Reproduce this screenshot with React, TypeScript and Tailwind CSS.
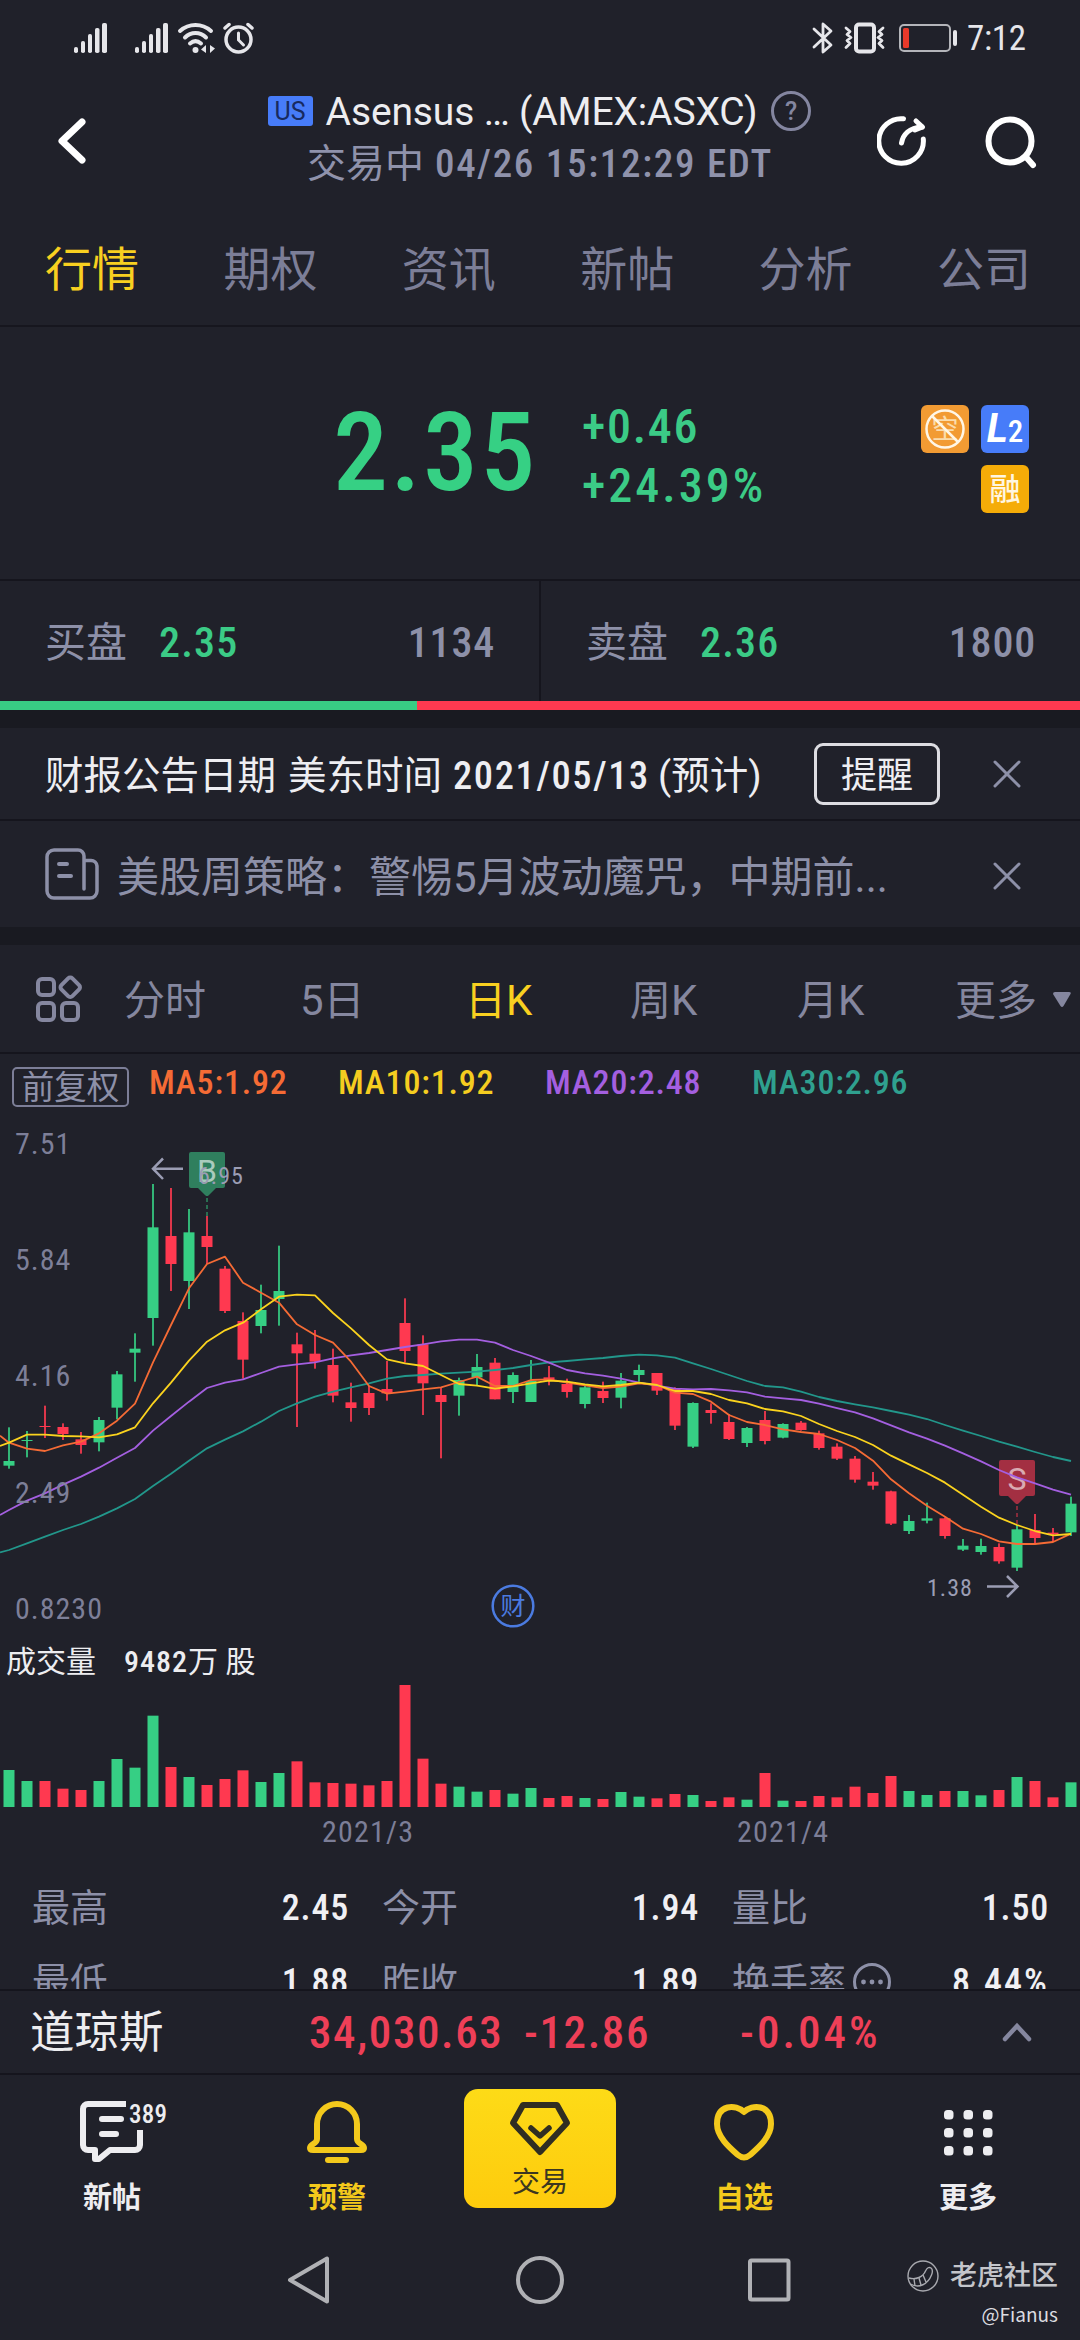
import * as React from "react";

type Candle = [color: "g" | "r", high: number, top: number, bottom: number, low: number, volume: number];

const GREEN = "#36cf84";
const RED = "#ff3950";
const MUTED = "#8486a0";

const STEP = 18;

// Prices and volumes in thirds of a pixel, measured down from the chart's top edge
const candles: Candle[] = [
    ["g", 952, 1053, 1067, 1076, 111],
    ["g", 963, 990, 993, 1042, 78],
    ["r", 887, 948, 951, 984, 78],
    ["r", 940, 951, 972, 990, 55],
    ["r", 966, 988, 1005, 1031, 51],
    ["g", 921, 930, 997, 1024, 78],
    ["g", 783, 793, 893, 928, 144],
    ["g", 670, 716, 728, 815, 118],
    ["g", 222, 352, 624, 707, 274],
    ["r", 234, 378, 462, 543, 120],
    ["g", 297, 367, 513, 597, 90],
    ["r", 318, 378, 411, 462, 66],
    ["r", 468, 476, 603, 609, 84],
    ["r", 607, 633, 749, 806, 110],
    ["g", 524, 600, 648, 670, 75],
    ["g", 407, 543, 567, 647, 102],
    ["r", 668, 703, 730, 951, 137],
    ["r", 660, 731, 755, 776, 74],
    ["r", 716, 765, 857, 877, 72],
    ["r", 818, 877, 894, 935, 70],
    ["r", 828, 849, 894, 915, 65],
    ["r", 753, 837, 850, 872, 78],
    ["r", 565, 639, 723, 758, 366],
    ["r", 676, 703, 820, 915, 145],
    ["r", 832, 855, 876, 1045, 70],
    ["g", 803, 810, 857, 917, 61],
    ["g", 732, 771, 802, 825, 46],
    ["r", 744, 758, 868, 868, 51],
    ["g", 787, 795, 846, 879, 40],
    ["g", 750, 813, 876, 876, 57],
    ["r", 768, 802, 812, 826, 27],
    ["r", 806, 822, 846, 863, 33],
    ["g", 828, 832, 882, 895, 27],
    ["r", 815, 843, 864, 879, 24],
    ["g", 789, 812, 863, 895, 45],
    ["g", 764, 780, 795, 815, 31],
    ["r", 789, 789, 842, 855, 26],
    ["r", 832, 835, 947, 960, 39],
    ["g", 877, 879, 1010, 1014, 36],
    ["r", 880, 900, 909, 941, 18],
    ["r", 912, 936, 987, 990, 29],
    ["g", 951, 954, 999, 1011, 22],
    ["r", 903, 930, 993, 1003, 102],
    ["g", 940, 942, 983, 985, 19],
    ["r", 933, 938, 960, 962, 18],
    ["r", 962, 970, 1014, 1019, 33],
    ["r", 1000, 1010, 1046, 1050, 29],
    ["r", 1038, 1046, 1109, 1118, 61],
    ["r", 1086, 1115, 1127, 1139, 42],
    ["r", 1142, 1144, 1241, 1245, 93],
    ["g", 1215, 1233, 1263, 1272, 48],
    ["g", 1178, 1225, 1232, 1240, 36],
    ["r", 1222, 1225, 1278, 1286, 48],
    ["g", 1287, 1307, 1319, 1323, 48],
    ["g", 1286, 1308, 1326, 1334, 35],
    ["r", 1300, 1311, 1354, 1361, 51],
    ["g", 1245, 1258, 1373, 1383, 90],
    ["r", 1212, 1260, 1284, 1300, 78],
    ["r", 1254, 1268, 1273, 1295, 29],
    ["g", 1160, 1181, 1267, 1278, 74],
];

const averages = [
    {
        color: "#22978b",
        values: [1327, 1320, 1300, 1280, 1260, 1242, 1220, 1195, 1167, 1128, 1091, 1052, 1015, 989, 964, 935, 903, 880, 860, 845, 832, 820, 806, 798, 795, 791, 788, 785, 780, 774, 765, 757, 753, 748, 744, 738, 734, 736, 743, 760, 777, 795, 813, 828, 832, 845, 861, 873, 883, 892, 903, 914, 927, 945, 962, 978, 995, 1010, 1026, 1041, 1053],
    },
    {
        color: "#a45fe0",
        values: [1215, 1200, 1172, 1150, 1124, 1100, 1073, 1043, 1014, 962, 918, 875, 834, 818, 808, 789, 770, 763, 757, 745, 736, 729, 720, 711, 703, 694, 689, 689, 698, 720, 738, 758, 780, 790, 797, 806, 818, 827, 836, 838, 837, 841, 847, 860, 865, 870, 881, 894, 907, 925, 946, 967, 986, 1007, 1030, 1054, 1080, 1102, 1120, 1139, 1154],
    },
    {
        color: "#f56b35",
        values: [977, 998, 1016, 1023, 1006, 995, 970, 932, 881, 757, 645, 535, 462, 440, 518, 548, 578, 643, 675, 698, 755, 828, 851, 845, 838, 832, 816, 800, 828, 828, 810, 808, 818, 826, 834, 830, 820, 825, 848, 852, 875, 915, 936, 945, 958, 966, 972, 990, 1014, 1052, 1108, 1150, 1187, 1220, 1256, 1272, 1294, 1302, 1302, 1296, 1271],
    },
    {
        color: "#fbd31e",
        values: [1008, 998, 974, 974, 978, 979, 982, 973, 952, 880, 818, 752, 695, 661, 638, 598, 560, 554, 556, 609, 655, 705, 748, 760, 768, 795, 822, 827, 836, 829, 820, 812, 815, 823, 829, 825, 818, 825, 843, 843, 852, 870, 880, 897, 904, 918, 942, 963, 981, 1005, 1037, 1063, 1089, 1118, 1154, 1190, 1223, 1245, 1263, 1276, 1272],
    },
];

const axisLabels = [
    { text: "7.51", y: 44 },
    { text: "5.84", y: 160 },
    { text: "4.16", y: 276 },
    { text: "2.49", y: 393 },
    { text: "0.8230", y: 509 },
];

function toPoints(values: number[]) {
    // the first value sits on the left edge, half a step before candle 0
    return values.map((v, i) => `${i === 0 ? 0 : 9 + STEP * (i - 1)},${v / 3}`).join(" ");
}

function Signal() {
    return (
        <svg width="34" height="32" viewBox="0 0 34 32" fill="#e6e6ea">
            <rect x="0" y="25" width="4" height="6" rx="1.8" />
            <rect x="7" y="19" width="4" height="12" rx="1.8" />
            <rect x="14" y="12" width="4" height="19" rx="1.8" />
            <rect x="21" y="6" width="4.5" height="25" rx="1.8" />
            <rect x="28" y="1" width="5" height="30" rx="1.8" />
        </svg>
    );
}

function StatusBar() {
    return (
        <div className="flex h-[75px] items-center pl-[74px] pr-[56px]">
            <Signal />
            <div className="w-[27px]" />
            <Signal />
            <svg className="ml-[8px]" width="38" height="32" viewBox="0 0 38 32" fill="none" stroke="#e6e6ea" strokeWidth="4" strokeLinecap="round">
                <path d="M3 9C12 1 25 1 34 9" />
                <path d="M8 15.5C14 9.500 23 9.500 29 15.500" />
                <path d="M13 21.500C16.500 18.500 20.500 18.500 24 21.500" />
                <circle cx="18.500" cy="28" r="3" fill="#e6e6ea" stroke="none" />
                <path d="M29 23v8l-5-3.500zM33 23l5 3.500-5 4.500z" fill="#e6e6ea" stroke="none" />
            </svg>
            <svg className="ml-[8px]" width="32" height="32" viewBox="0 0 32 32" fill="none" stroke="#e6e6ea" strokeWidth="3.500" strokeLinecap="round">
                <circle cx="15.500" cy="17.500" r="12.500" />
                <path d="M15.500 11v7l5 5" strokeWidth="3" />
                <path d="M2 6l4-3.500M29 6l-4-3.500" />
            </svg>
            <div className="flex-1" />
            <svg width="22" height="32" viewBox="0 0 22 32" fill="none" stroke="#e6e6ea" strokeWidth="2.800" strokeLinejoin="round" strokeLinecap="round">
                <path d="M2 7L19 23L11 30V2L19 9L2 25" />
            </svg>
            <svg className="ml-[10px]" width="42" height="32" viewBox="0 0 42 32" fill="none" stroke="#e6e6ea" strokeLinecap="round" strokeLinejoin="round">
                <rect x="12" y="2.500" width="18" height="27" rx="3" strokeWidth="4" />
                <path d="M2 6l4 3.500-3 3 4 3-4 3 3 3-4 4M39 6l-4 3.500 3 3-4 3 4 3-3 3 4 4" strokeWidth="2.800" />
            </svg>
            <svg className="ml-[13px]" width="59" height="30" viewBox="0 0 59 30">
                <rect x="1" y="2" width="50" height="26" rx="4" fill="none" stroke="#b4b5ba" strokeWidth="2" />
                <rect x="4" y="5" width="6" height="20" rx="1.500" fill="#e8392a" />
                <rect x="54" y="7" width="4" height="16" rx="2" fill="#e6e6ea" />
            </svg>
            <span className="ml-[9px] w-[57px] whitespace-nowrap pt-[2px] text-[35px] leading-none tracking-[-0.300px] text-[#e6e6ea] [font-stretch:75%]">7:12</span>
        </div>
    );
}

function Header() {
    return (
        <div className="grid h-[146px] grid-cols-[230px_1fr_230px]">
            <div className="pl-[55px] pt-[41px]">
                <svg width="34" height="50" viewBox="0 0 34 50" fill="none" stroke="#fff" strokeWidth="7" strokeLinecap="round" strokeLinejoin="round">
                    <path d="M27 6L7 25L27 44" />
                </svg>
            </div>
            <div className="flex flex-col items-center pt-[13px]">
                <div className="flex h-[46px] items-center whitespace-nowrap">
                    <span className="flex h-[30px] w-[45px] items-center justify-center rounded-[3px] bg-[#477cf9] text-[25px] leading-none text-[#172a60]">US</span>
                    <span className="ml-[13px] pt-[3px] text-[39px] leading-none tracking-[-0.150px] text-[#ededf0]">Asensus … (AMEX:ASXC)</span>
                    <svg className="ml-[13px]" width="42" height="42" viewBox="0 0 42 42">
                        <circle cx="21" cy="21" r="18.500" fill="none" stroke={MUTED} strokeWidth="3" />
                        <text x="21" y="30" textAnchor="middle" fontSize="25" fontWeight="500" fill={MUTED}>?</text>
                    </svg>
                </div>
                <div className="mt-[7px] flex h-[46px] items-center gap-[11px] whitespace-nowrap text-[39px] leading-none text-[#8f92ab]">
                    <span>交易中</span>
                    <span className="font-medium tracking-[1.700px] [font-stretch:75%]">04/26 15:12:29 EDT</span>
                </div>
            </div>
            <div className="flex items-start pl-[27px] pt-[40px]">
                <svg width="52" height="52" viewBox="0 0 52 52" fill="none" stroke="#fff" strokeWidth="5" strokeLinecap="round" strokeLinejoin="round">
                    <path d="M26.500 3.800A22.300 22.300 0 1 0 46.300 24" />
                    <path d="M24.500 28C26 20 32 12.500 45 12" />
                    <path d="M39 6L45.500 12L38 15" />
                </svg>
                <svg className="ml-[53px]" width="58" height="58" viewBox="0 0 58 58" fill="none" stroke="#fff" strokeWidth="6" strokeLinecap="round">
                    <circle cx="28" cy="26" r="21.500" />
                    <path d="M44 42L51 50" />
                </svg>
            </div>
        </div>
    );
}

function MainTabs() {
    const tabs = ["行情", "期权", "资讯", "新帖", "分析", "公司"];
    return (
        <div className="flex h-[106px] justify-between border-b-2 border-[#16161e] pl-[45px] pr-[49px] pt-[25px] text-[47px] leading-none text-[#7c7e97]">
            {tabs.map((tab, i) => (
                <span key={tab} className={i === 0 ? "text-[#f8d020]" : ""}>{tab}</span>
            ))}
        </div>
    );
}

function Quote() {
    return (
        <div className="flex h-[254px] border-b-2 border-[#15151d] text-[#3bcb86]">
            <div className="w-[582px] pl-[333px] pt-[71px]">
                <span className="text-[110px] font-medium leading-none tracking-[2.200px] text-[#36d084] [font-stretch:75%]">2.35</span>
            </div>
            <div className="flex w-[339px] flex-col pt-[70px] text-[48px] font-medium leading-[59px] [font-stretch:75%]">
                <span className="tracking-[1.700px]">+0.46</span>
                <span className="tracking-[3px]">+24.39%</span>
            </div>
            <div className="grid h-fit grid-cols-[48px_48px] gap-[12px] pt-[78px]">
                <div className="flex size-[48px] items-center justify-center rounded-[6px] bg-[#f29b33]">
                    <svg width="44" height="44" viewBox="0 0 44 44">
                        <text x="22" y="32" textAnchor="middle" fontSize="27" fill="#fbdcab">空</text>
                        <circle cx="22" cy="22" r="18.500" fill="none" stroke="#fff6e6" strokeWidth="2.500" />
                        <path d="M9 9L35 35" stroke="#fff6e6" strokeWidth="2.500" />
                    </svg>
                </div>
                <div className="flex size-[48px] items-baseline justify-center rounded-[6px] bg-[#477cf9] leading-[48px] text-white">
                    <span className="text-[40px] font-bold italic">L</span>
                    <span className="text-[31px] font-medium [font-stretch:75%]">2</span>
                </div>
                <div className="col-start-2 flex size-[48px] items-center justify-center rounded-[6px] bg-[#f5ac08] text-[31px] font-medium leading-none text-[#fff6e0]">融</div>
            </div>
        </div>
    );
}

function BookSide({ label, price, size }: { label: string; price: string; size: string }) {
    return (
        <div className="flex flex-1 items-center pl-[45px] pr-[44px] pt-[4px] text-[41px] leading-none text-[#8d90a8]">
            <span className="w-[114px]">{label}</span>
            <span className="flex-1 text-[42px] font-medium tracking-[1.200px] text-[#3bcb86] [font-stretch:75%]">{price}</span>
            <span className="text-[42px] font-medium tracking-[0.800px] [font-stretch:75%]">{size}</span>
        </div>
    );
}

function Close() {
    return (
        <svg width="30" height="30" viewBox="0 0 30 30" stroke="#8d90a8" strokeWidth="3" strokeLinecap="round">
            <path d="M3 3L27 27M27 3L3 27" />
        </svg>
    );
}

function Notices() {
    return (
        <div className="border-y-[18px] border-[#191a21]">
            <div className="flex h-[93px] items-center border-b-2 border-[#15151d] pl-[45px] text-[38.500px] leading-none text-[#eeeef2]">
                <span className="w-[243px] whitespace-nowrap pt-[6px]">财报公告日期</span>
                <span className="w-[165px] pt-[6px]">美东时间</span>
                <span className="w-[205px] whitespace-nowrap pt-[6px] font-medium tracking-[1.600px] [font-stretch:75%]">2021/05/13</span>
                <span className="w-[110px] whitespace-nowrap pt-[6px]">(预计)</span>
                <span className="ml-[46px] flex h-[62px] w-[126px] items-center justify-center rounded-[9px] border-[3px] border-[#dddde2] pt-[5px] text-[36px]">提醒</span>
                <div className="ml-[52px]"><Close /></div>
            </div>
            <div className="flex h-[106px] items-center pl-[45px] text-[42px] leading-none text-[#8d90a8]">
                <svg width="54" height="52" viewBox="0 0 54 52" fill="none" stroke="#8d90a8" strokeWidth="3.500" strokeLinecap="round">
                    <path d="M39 13V8a6 6 0 0 0-6-6H9a7 7 0 0 0-7 7v34a7 7 0 0 0 7 7h36a7 7 0 0 0 7-7V18a6 6 0 0 0-6-5.500h-7V41" />
                    <path d="M14 16h8M14 28h12" strokeWidth="4" />
                </svg>
                <span className="ml-[18px] w-[875px] whitespace-nowrap pt-[7px]">美股周策略：警惕5月波动魔咒，中期前...</span>
                <div className="pt-[3px]"><Close /></div>
            </div>
        </div>
    );
}

function ChartTabs() {
    return (
        <div className="flex h-[109px] items-center border-b-2 border-[#15151d] pl-[34px] pt-[5px] text-[41px] leading-none text-[#85879f]">
            <svg className="mb-[4px]" width="50" height="50" viewBox="0 0 50 50" fill="none" stroke="#85879f" strokeWidth="4">
                <rect x="4" y="5" width="16" height="16" rx="4" />
                <rect x="4" y="29" width="16" height="17" rx="4" />
                <rect x="28" y="29" width="16" height="17" rx="4" />
                <rect x="28.500" y="5.500" width="15.500" height="15.500" rx="3" transform="rotate(45 36.250 13.250)" />
            </svg>
            <span className="ml-[40px] w-[176px]">分时</span>
            <span className="w-[165px]"><span className="text-[42px]">5</span>日</span>
            <span className="w-[165px] text-[#f8d020]">日<span className="text-[42px]">K</span></span>
            <span className="w-[167px]">周<span className="text-[42px]">K</span></span>
            <span className="w-[158px]">月<span className="text-[42px]">K</span></span>
            <span className="w-[97px]">更多</span>
            <svg className="mb-[3px]" width="20" height="18" viewBox="0 0 20 18" fill="#85879f">
                <path d="M1 3Q1 1 3 1H17Q19.500 1 18.500 3L11.500 15Q10 17 8.500 15Z" />
            </svg>
        </div>
    );
}

function MaLegend() {
    return (
        <div className="flex h-[56px] items-start pl-[12px] pt-[11px] text-[34px] font-medium leading-none tracking-[0.800px] [font-stretch:75%]">
            <span className="mt-[2px] flex h-[40px] w-[117px] items-center justify-center rounded-[5px] border-2 border-[#7c7e97] pt-[3px] text-[32.500px] font-normal tracking-normal text-[#8d90a8]">前复权</span>
            <span className="ml-[20px] w-[189px] text-[#f56b35]">MA5:1.92</span>
            <span className="w-[207px] text-[#f5cd20]">MA10:1.92</span>
            <span className="w-[207px] text-[#a45fe0]">MA20:2.48</span>
            <span className="text-[#2fa08f]">MA30:2.96</span>
        </div>
    );
}

function Marker({ x, y, letter, fill }: { x: number; y: number; letter: string; fill: string }) {
    return (
        <g transform={`translate(${x} ${y})`}>
            <path d="M-16 0H16Q18 0 18 2V34Q18 36 16 36H9L1.500 43.500Q0 44.500-1.500 43.500L-9 36H-16Q-18 36-18 34V2Q-18 0-16 0Z" fill={fill} />
            <text className="[font-stretch:100%]" x="0" y="29.500" textAnchor="middle" fontSize="32" fill="#ffffff" fillOpacity="0.6">{letter}</text>
        </g>
    );
}

function PriceChart() {
    return (
        <svg className="block [font-stretch:75%]" width="1080" height="520" viewBox="0 0 1080 520">
            {candles.map(([color, high, top, bottom, low], i) => {
                const x = 9 + STEP * i;
                const fill = color === "g" ? GREEN : RED;
                return (
                    <g key={i} fill={fill}>
                        <rect x={x - 1} y={high / 3} width={2} height={(low - high) / 3} fillOpacity="0.85" />
                        <rect x={x - 5.5} y={top / 3} width={11} height={Math.max(1, (bottom - top) / 3)} />
                    </g>
                );
            })}
            <path d="M207 88V106" stroke={GREEN} strokeWidth="1.5" strokeDasharray="4 3" opacity="0.6" />
            <path d="M1017 396V415" stroke={RED} strokeWidth="1.5" strokeDasharray="4 3" opacity="0.6" />
            <Marker x={207} y={42} letter="B" fill="#2f7f5e" />
            <Marker x={1017} y={350} letter="S" fill="#a32f42" />
            {averages.map((line) => (
                <polyline key={line.color} points={toPoints(line.values)} fill="none" stroke={line.color} strokeWidth="1.8" strokeLinejoin="round" />
            ))}
            {axisLabels.map((label) => (
                <text key={label.text} x="15" y={label.y} fontSize="30" letterSpacing="1" fill="#8486a0" fillOpacity="0.95">{label.text}</text>
            ))}
            <g fill="none" stroke="#9b9db4" strokeWidth="2.5">
                <path d="M183 58.700H153M163 48.500L153 58.700L163 69" />
                <path d="M987 476.500H1017M1007 466L1017.500 476.500L1007 487" />
            </g>
            <text x="198" y="74" fontSize="24" letterSpacing="1" fill="#9b9db4">6.95</text>
            <text x="927" y="486" fontSize="24" letterSpacing="1" fill="#9b9db4">1.38</text>
            <circle cx="513" cy="496" r="20.300" fill="none" stroke="#4b7be0" strokeWidth="2.500" />
            <text x="513" y="505" textAnchor="middle" fontSize="25" fill="#4b7be0">财</text>
        </svg>
    );
}

function Volume() {
    return (
        <div className="h-[228px]">
            <div className="flex h-[50px] items-end pb-[3px] pl-[6px] text-[30px] leading-none text-[#ededf0]">
                <span className="w-[118px]">成交量</span>
                <span className="whitespace-nowrap"><span className="font-medium tracking-[1px] [font-stretch:75%]">9482</span>万 股</span>
            </div>
            <svg className="block" width="1080" height="127" viewBox="0 0 1080 127">
                {candles.map(([color, , , , , volume], i) => (
                    <rect key={i} x={3.5 + STEP * i} y={127 - volume / 3} width={11} height={volume / 3} fill={color === "g" ? GREEN : RED} />
                ))}
            </svg>
            <div className="flex pl-[322px] pt-[10px] text-[30px] leading-none tracking-[1.200px] text-[#7c7e97] [font-stretch:75%]">
                <span className="w-[415px]">2021/3</span>
                <span>2021/4</span>
            </div>
        </div>
    );
}

const stats = [
    { label: "最高", value: "2.45" },
    { label: "今开", value: "1.94" },
    { label: "量比", value: "1.50" },
    { label: "最低", value: "1.88" },
    { label: "昨收", value: "1.89" },
    { label: "换手率", value: "8.44%", more: true },
];

function Stats() {
    return (
        <div className="h-[131px] overflow-hidden">
            <div className="grid auto-rows-[74px] grid-cols-[317px_317px_317px] gap-x-[33px] pl-[32px] pt-[13px]">
                {stats.map((s) => (
                    <div key={s.label} className="flex items-center whitespace-nowrap text-[38px] leading-none text-[#8d90a8]">
                        <span>{s.label}</span>
                        {s.more && (
                            <svg className="ml-[6px]" width="40" height="40" viewBox="0 0 40 40" fill="#8d90a8">
                                <circle cx="20" cy="20" r="17.500" fill="none" stroke="#8d90a8" strokeWidth="3" />
                                <circle cx="11.500" cy="20" r="2.400" />
                                <circle cx="20" cy="20" r="2.400" />
                                <circle cx="28.500" cy="20" r="2.400" />
                            </svg>
                        )}
                        <span className={s.more ? "ml-auto text-[36px] font-medium tracking-[2px] text-[#f0f0f4] [font-stretch:75%]" : "ml-auto text-[36px] font-medium tracking-[0.800px] text-[#f0f0f4] [font-stretch:75%]"}>{s.value}</span>
                    </div>
                ))}
            </div>
        </div>
    );
}

function IndexBar() {
    return (
        <div className="flex h-[86px] items-center border-y-2 border-[#15151d] pl-[30px] text-[45px] font-medium leading-none tracking-[1.600px] text-[#ee3f57] [font-stretch:75%]">
            <span className="w-[279px] pt-[3px] text-[44.500px] font-normal tracking-normal text-[#ededf0]">道琼斯</span>
            <span className="w-[215px]">34,030.63</span>
            <span className="w-[216px]">-12.86</span>
            <span className="w-[260px] tracking-[3px]">-0.04%</span>
            <svg width="34" height="24" viewBox="0 0 34 24" fill="none" stroke="#85879f" strokeWidth="4.500" strokeLinecap="round">
                <path d="M5 19L17 6L29 19" />
            </svg>
        </div>
    );
}

function NavItem({ label, color, children }: { label: string; color: string; children: React.ReactNode }) {
    return (
        <div className="flex w-[120px] flex-col items-center pt-[22px]" style={{ color }}>
            <div className="relative flex h-[68px] items-center justify-center">{children}</div>
            <span className="mt-[19px] text-[29px] font-bold leading-none">{label}</span>
        </div>
    );
}

function BottomNav() {
    const dots = [0, 1, 2];
    return (
        <div className="flex h-[145px] items-start pl-[52px]">
            <NavItem label="新帖" color="#ededf0">
                <svg width="68" height="64" viewBox="0 0 68 64" fill="none" stroke="currentColor" strokeWidth="6" strokeLinecap="butt" strokeLinejoin="round">
                    <path d="M48 5H10a5 5 0 0 0-5 5V46a5 5 0 0 0 5 5H17V60H21L32 51H57a5 5 0 0 0 5-5V31" />
                    <path d="M24 20H43M24 35H38" strokeLinecap="round" />
                </svg>
                <span className="absolute left-[51px] top-[5px] text-[25px] font-medium leading-none tracking-[0.300px] [font-stretch:75%]">389</span>
            </NavItem>
            <div className="ml-[105px]">
                <NavItem label="预警" color="#f3c91c">
                    <svg width="64" height="66" viewBox="0 0 64 66" fill="none" stroke="currentColor" strokeWidth="6" strokeLinecap="round" strokeLinejoin="round">
                        <path d="M12 26a20 20 0 0 1 40 0V41C52 46 59 46 59 50Q59 52 56 52H8Q5 52 5 50C5 46 12 46 12 41Z" />
                        <path d="M23 62H41" />
                    </svg>
                </NavItem>
            </div>
            <div className="ml-[67px] mt-[14px] flex h-[119px] w-[152px] flex-col items-center rounded-[14px] bg-linear-to-b from-[#fddb17] to-[#fecb0c] pt-[11px] text-[28px] leading-none text-[#3c3720]">
                <svg width="62" height="58" viewBox="0 0 62 58" fill="none" stroke="#302e22" strokeWidth="6" strokeLinecap="round" strokeLinejoin="round">
                    <path d="M14 5H48L58 23L31 52L4 23Z" />
                    <path d="M22 28L31 36L40 28" strokeWidth="5.500" />
                </svg>
                <span className="mt-[11px]">交易</span>
            </div>
            <div className="ml-[68px]">
                <NavItem label="自选" color="#f3c91c">
                    <svg width="64" height="60" viewBox="0 0 64 60" fill="none" stroke="currentColor" strokeWidth="6" strokeLinejoin="round">
                        <path d="M32 11C24 3 5 3 5 23C5 36 18 47 26 54Q32 59 38 54C46 47 59 36 59 23C59 3 40 3 32 11Z" />
                    </svg>
                </NavItem>
            </div>
            <div className="ml-[104px]">
                <NavItem label="更多" color="#ededf0">
                    <svg className="mt-[5px]" width="50" height="48" viewBox="0 0 50 48" fill="currentColor">
                        {dots.map((row) => dots.map((col) => (
                            <rect key={`${row}-${col}`} x={col * 19.5 + 1} y={row * 18} width="9.500" height="9.500" rx="3.500" />
                        )))}
                    </svg>
                </NavItem>
            </div>
        </div>
    );
}

function SystemNav() {
    return (
        <div className="flex h-[120px] items-start pl-[284px] pt-[31px]">
            <svg width="50" height="58" viewBox="0 0 50 58" fill="none" stroke="#b0b1b5" strokeWidth="4" strokeLinejoin="round">
                <path d="M6 29L43 7.500V50.500Z" />
            </svg>
            <svg className="ml-[177px]" width="58" height="58" viewBox="0 0 58 58" fill="none" stroke="#b0b1b5" strokeWidth="4">
                <circle cx="29" cy="29" r="22" />
            </svg>
            <svg className="ml-[171px]" width="58" height="58" viewBox="0 0 58 58" fill="none" stroke="#b0b1b5" strokeWidth="4">
                <rect x="10" y="9.500" width="38.500" height="39" rx="1.500" />
            </svg>
            <div className="ml-auto flex flex-col items-end pr-[22px] pt-[9px]">
                <div className="flex items-center text-[27px] font-medium leading-none text-[#c4c5ca]">
                    <svg className="mr-[11px]" width="32" height="32" viewBox="0 0 32 32" fill="none" stroke="#a9aab0" strokeWidth="1.400">
                        <circle cx="16" cy="16" r="15" />
                        <path d="M2 18C9 20 16 17 18.500 11Q21 6 24 8Q26.500 10 24.500 15C21 24 12 29 3.500 24" />
                        <path d="M7 19L8 26M12 18L14 25M16 15L19 22" />
                    </svg>
                    老虎社区
                </div>
                <span className="mt-[12px] font-['Noto_Sans_CJK_SC'] text-[19px] leading-none text-[#dcdce0]">@Fianus</span>
            </div>
        </div>
    );
}

export default function App() {
    return (
        <div className="h-[2340px] w-[1080px] overflow-hidden bg-[#20212a] [font-family:Roboto,'Noto_Sans_CJK_SC',sans-serif]">
            <StatusBar />
            <Header />
            <MainTabs />
            <Quote />
            {/* Best bid and ask */}
            <div className="flex h-[120px] divide-x-2 divide-[#15151d]">
                <BookSide label="买盘" price="2.35" size="1134" />
                <BookSide label="卖盘" price="2.36" size="1800" />
            </div>
            <div className="flex h-[9px] bg-[#ff3950]">
                <div className="w-[417px] bg-[#38cc84]" />
            </div>
            <Notices />
            <ChartTabs />
            <MaLegend />
            <PriceChart />
            <Volume />
            <Stats />
            <IndexBar />
            <BottomNav />
            <SystemNav />
        </div>
    );
}
